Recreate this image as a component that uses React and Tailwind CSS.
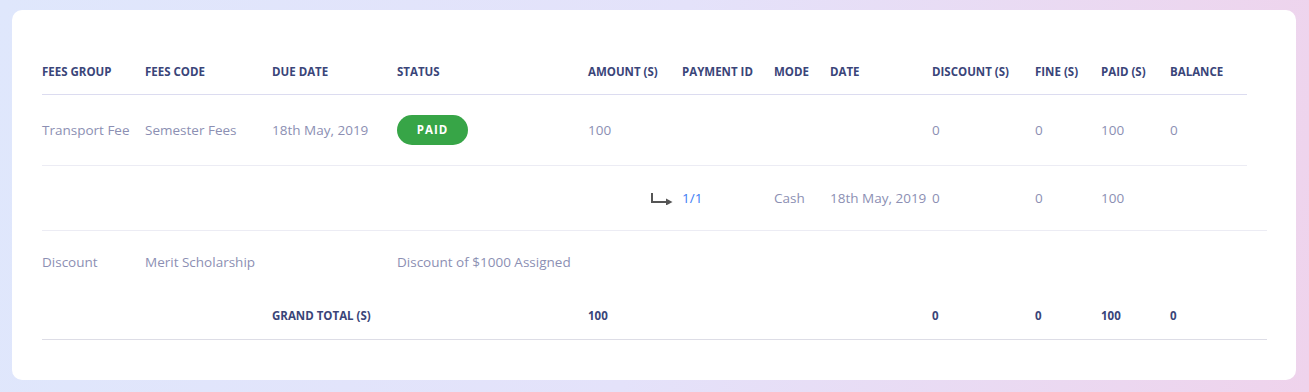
export default function App() {
  const cols = "grid w-[1205px] grid-cols-[103px_127px_125px_191px_94px_92px_56px_102px_103px_66px_69px_77px]";
  const colsWide = "grid w-[1225px] grid-cols-[103px_127px_125px_191px_94px_92px_56px_102px_103px_66px_69px_97px]";
  const th = "text-[11.5px] font-bold uppercase text-[#3a4579] tracking-[0px]";
  const td = "text-[13.5px] text-[#8c8fb3]";
  const tb = "text-[11.5px] font-bold text-[#3a4579]";
  return (
    <div className="w-[1309px] h-[392px] bg-[linear-gradient(100deg,#dfe7fc_0%,#e4e2fa_50%,#efd3ec_100%)] pt-[10px] pl-[12px]" style={{ fontFamily: '"Open Sans", "Noto Sans", sans-serif' }}>
      <div className="w-[1284px] h-[370px] bg-white rounded-[10px] pl-[30px] pt-[40px]">
        <div className={`${cols} h-[45px] items-center border-b border-[#dcdcf0] pb-[1px]`}>
          <div className={th}>Fees Group</div>
          <div className={th}>Fees Code</div>
          <div className={th}>Due Date</div>
          <div className={th}>Status</div>
          <div className={th}>Amount (S)</div>
          <div className={th}>Payment ID</div>
          <div className={th}>Mode</div>
          <div className={th}>Date</div>
          <div className={th}>Discount (S)</div>
          <div className={th}>Fine (S)</div>
          <div className={th}>Paid (S)</div>
          <div className={th}>Balance</div>
        </div>
        <div className={`${cols} h-[71px] items-center border-b border-[#ececf4]`}>
          <div className={td}>Transport Fee</div>
          <div className={td}>Semester Fees</div>
          <div className={td}>18th May, 2019</div>
          <div>
            <span className="inline-flex items-center justify-center w-[71px] h-[30px] rounded-full bg-[#37a547] text-white text-[11.5px] font-bold tracking-[1px]">PAID</span>
          </div>
          <div className={td}>100</div>
          <div></div>
          <div></div>
          <div></div>
          <div className={td}>0</div>
          <div className={td}>0</div>
          <div className={td}>100</div>
          <div className={td}>0</div>
        </div>
        <div className={`${colsWide} h-[65px] items-center border-b border-[#ececf4]`}>
          <div></div>
          <div></div>
          <div></div>
          <div></div>
          <div className="flex justify-end pr-[9px]">
            <svg width="22" height="12" viewBox="0 0 22 12" className="mt-[1px]">
              <path d="M1 0 V9 H16" fill="none" stroke="#555" strokeWidth="2" />
              <path d="M15 5.5 L21.5 9 L15 12.5 Z" fill="#555" />
            </svg>
          </div>
          <div className="text-[13.5px] text-[#3d7cf4]">1/1</div>
          <div className={td}>Cash</div>
          <div className={td}>18th May, 2019</div>
          <div className={td}>0</div>
          <div className={td}>0</div>
          <div className={td}>100</div>
          <div></div>
        </div>
        <div className={`${colsWide} h-[62px] items-center`}>
          <div className={td}>Discount</div>
          <div className={td}>Merit Scholarship</div>
          <div></div>
          <div className={`${td} col-span-2`}>Discount of $1000 Assigned</div>
        </div>
        <div className={`${colsWide} h-[47px] items-center border-b border-[#dddde6]`}>
          <div></div>
          <div></div>
          <div className={`${th}`}>Grand Total (S)</div>
          <div></div>
          <div className={tb}>100</div>
          <div></div>
          <div></div>
          <div></div>
          <div className={tb}>0</div>
          <div className={tb}>0</div>
          <div className={tb}>100</div>
          <div className={tb}>0</div>
        </div>
      </div>
    </div>
  );
}
